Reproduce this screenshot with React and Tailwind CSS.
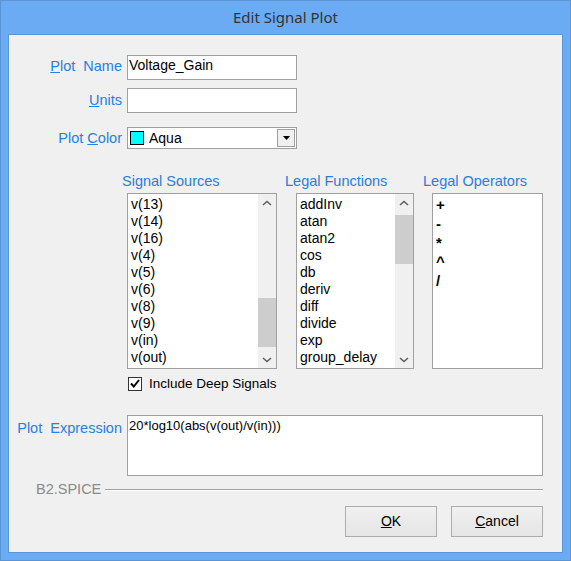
import React from "react";

// Edit Signal Plot dialog (Win8-style frame)

const LABEL = "text-[#2a7de1] text-[14.5px] leading-[17px]";

const sources = ["v(13)", "v(14)", "v(16)", "v(4)", "v(5)", "v(6)", "v(8)", "v(9)", "v(in)", "v(out)"];
const functions = ["addInv", "atan", "atan2", "cos", "db", "deriv", "diff", "divide", "exp", "group_delay"];
const operators = ["+", "-", "*", "^", "/"];

const Chevron = ({ up }) => (
  <svg width="10" height="6" viewBox="0 0 10 6">
    <path d={up ? "M1 5 L5 1.5 L9 5" : "M1 1 L5 4.5 L9 1"} fill="none" stroke="#606060" strokeWidth="1.6" />
  </svg>
);

// vertical scrollbar, thumb placed by offset/size inside the track
const ScrollBar = ({ top, size }) => (
  <div className="w-[18px] h-full flex flex-col bg-[#f0f0f0] shrink-0">
    <div className="h-[17px] flex items-center justify-center"><Chevron up /></div>
    <div className="flex-1 flex flex-col">
      <div style={{ height: top }} />
      <div className="bg-[#cdcdcd]" style={{ height: size }} />
    </div>
    <div className="h-[17px] flex items-center justify-center"><Chevron /></div>
  </div>
);

const ListBox = ({ items, width, thumbTop, thumbSize }) => (
  <div className={`h-[176px] border border-[#a0a0a0] bg-white flex ${width}`}>
    <div className="flex-1 overflow-hidden pl-[3px] pt-[2px]">
      {items.map((it) => (
        <div key={it} className="text-[14px] leading-[17px] text-black whitespace-nowrap">{it}</div>
      ))}
    </div>
    <ScrollBar top={thumbTop} size={thumbSize} />
  </div>
);

const TextBox = ({ value, className = "" }) => (
  <div className={`w-[170px] border border-[#a0a0a0] bg-white px-[1px] pt-[1px] text-[14px] leading-[17px] text-black ${className}`}>
    {value}
  </div>
);

const Button = ({ children }) => (
  <button className="w-[92px] h-[31px] border border-[#acacac] bg-gradient-to-b from-[#f0f0f0] to-[#e5e5e5] text-[14px] text-black">
    {children}
  </button>
);

export default function App() {
  return (
    <div
      className="w-[571px] h-[561px] bg-[#6aabf4] border border-[#5c95d6] flex flex-col overflow-hidden"
      style={{ fontFamily: '"Liberation Sans", Arial, sans-serif' }}
    >
      {/* title bar */}
      <div className="h-[33px] shrink-0 flex items-center justify-center text-[15px] text-[#333]" style={{ fontFamily: '"Noto Sans", sans-serif' }}>
        Edit Signal Plot
      </div>

      {/* client area */}
      <div className="mx-[7px] mb-[7px] flex-1 min-h-0 border border-[#5c95d6] bg-[#f0f0f0] flex flex-col pt-[20px] pr-[19px]">
        <div className="flex items-start">
          <div className={`w-[113px] text-right pt-[3px] whitespace-pre ${LABEL}`}><u>P</u>lot  Name</div>
          <TextBox value="Voltage_Gain" className="ml-[5px] h-[25px]" />
        </div>

        <div className="flex items-center mt-[8px]">
          <div className={`w-[113px] text-right ${LABEL}`}><u>U</u>nits</div>
          <TextBox value="" className="ml-[5px] h-[25px]" />
        </div>

        <div className="flex items-center mt-[14px]">
          <div className={`w-[113px] text-right ${LABEL}`}>Plot <u>C</u>olor</div>
          <div className="ml-[5px] w-[170px] h-[22px] border border-[#a0a0a0] bg-white flex items-center">
            <div className="ml-[2px] w-[14px] h-[14px] border border-black bg-[#00ffff]" />
            <span className="ml-[5px] flex-1 text-[14px] text-black">Aqua</span>
            <div className="mr-[1px] w-[18px] h-[18px] border border-[#a0a0a0] bg-[#f0f0f0] flex items-center justify-center">
              <svg width="7" height="4" viewBox="0 0 7 4"><path d="M0 0 H7 L3.5 4 Z" fill="#000" /></svg>
            </div>
          </div>
        </div>

        {/* lists */}
        <div className="flex ml-[113px] mt-[24px]">
          <div className="w-[155px] flex flex-col">
            <div className={`h-[20px] whitespace-nowrap ${LABEL}`}>Signal Sources</div>
            <ListBox items={sources} width="ml-[5px] w-[150px]" thumbTop={87} thumbSize={49} />
            <div className="flex items-center ml-[6px] mt-[6px] whitespace-nowrap">
              <div className="w-[14px] h-[14px] shrink-0 border border-[#333] bg-white flex items-center justify-center">
                <svg width="10" height="9" viewBox="0 0 10 9"><path d="M1 4.5 L3.8 7.5 L9 1" fill="none" stroke="#000" strokeWidth="2" /></svg>
              </div>
              <span className="ml-[7px] text-[13.5px] leading-[17px] text-black">Include Deep Signals</span>
            </div>
          </div>

          <div className="ml-[8px] w-[129px] flex flex-col">
            <div className={`h-[20px] whitespace-nowrap ${LABEL}`}>Legal Functions</div>
            <ListBox items={functions} width="ml-[11px] w-[118px]" thumbTop={4} thumbSize={49} />
          </div>

          <div className="ml-[9px] flex flex-col">
            <div className={`h-[20px] whitespace-nowrap ${LABEL}`}>Legal Operators</div>
            <div className="ml-[9px] w-[111px] h-[176px] border border-[#a0a0a0] bg-white pl-[3px] pt-[1px]">
              {operators.map((op) => (
                <div key={op} className="text-[15px] leading-[19px] font-bold text-black">{op}</div>
              ))}
            </div>
          </div>
        </div>

        {/* expression */}
        <div className="flex items-start mt-[23px]">
          <div className={`w-[113px] text-right pt-[5px] whitespace-pre ${LABEL}`}>Plot  Expression</div>
          <div className="ml-[5px] flex-1 h-[61px] border border-[#a0a0a0] bg-white px-[1px] pt-[1px] text-[13px] leading-[17px] text-black">
            20*log10(abs(v(out)/v(in)))
          </div>
        </div>

        {/* group line */}
        <div className="flex items-center ml-[27px] mt-[5px] h-[18px]">
          <span className="text-[14.5px] text-[#8a8a8a]">B2.SPICE</span>
          <div className="ml-[4px] flex-1 border-t border-[#a0a0a0] border-b border-b-white" />
        </div>

        <div className="flex justify-end gap-[14px] mt-[7px]">
          <Button><u>O</u>K</Button>
          <Button><u>C</u>ancel</Button>
        </div>
      </div>
    </div>
  );
}
